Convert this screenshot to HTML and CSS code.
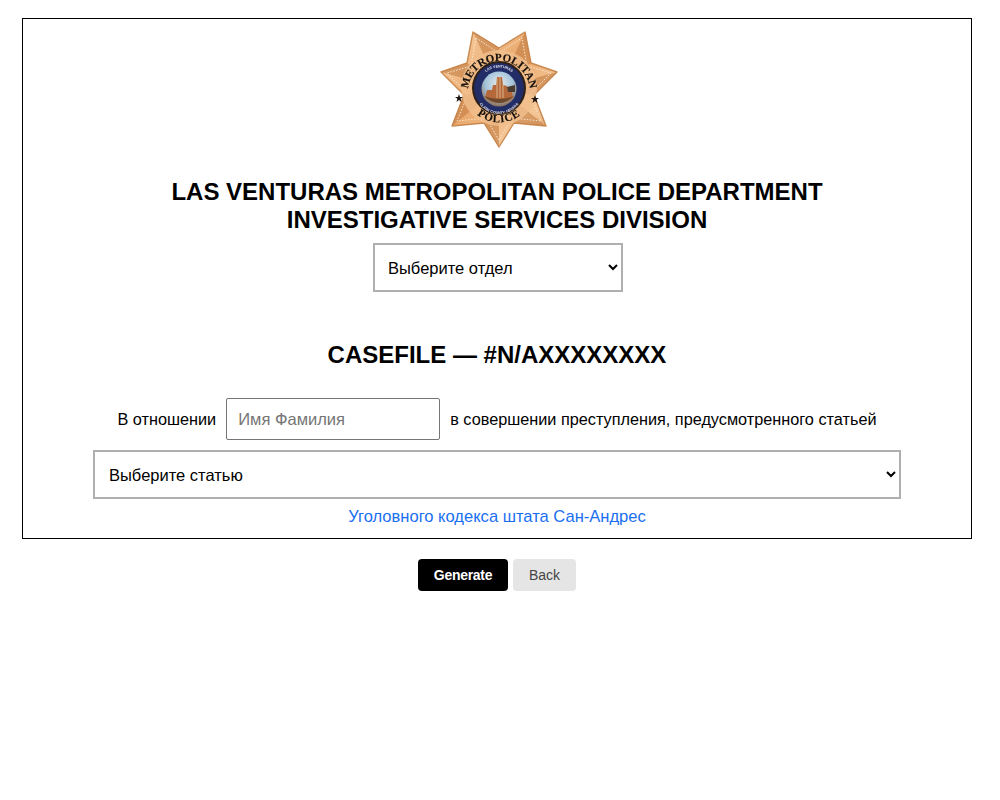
FILE: index.html
```html
<!DOCTYPE html>
<html lang="ru">
<head>
    <meta charset="UTF-8" />
    <meta name="viewport" content="width=device-width, initial-scale=1" />
    <title>Casefile</title>
    <link rel="stylesheet" href="styles.css">
</head>
<body>
    <div class="page">
        <div class="paper">
            <svg class="badge" viewBox="0 0 120 120" width="120" height="120">
                <defs>
                    <linearGradient id="gold" x1="0" y1="0" x2="1" y2="1">
                        <stop offset="0" stop-color="#f8d4aa"/>
                        <stop offset="0.45" stop-color="#eaa86c"/>
                        <stop offset="0.75" stop-color="#f5c797"/>
                        <stop offset="1" stop-color="#d08a4e"/>
                    </linearGradient>
                    <radialGradient id="scene" cx="0.5" cy="0.35" r="0.65">
                        <stop offset="0" stop-color="#e8ecec"/>
                        <stop offset="0.6" stop-color="#a3c3da"/>
                        <stop offset="1" stop-color="#8a6f58"/>
                    </radialGradient>
                    <path id="arc-top" d="M 29 62 A 31 31 0 0 1 91 62"/>
                    <path id="arc-bottom" d="M 27 68 A 34.5 34.5 0 0 0 93 68"/>
                    <path id="arc-ring-top" d="M 39.5 58 A 20.5 20.5 0 0 1 80.5 58"/>
                    <path id="arc-ring-bottom" d="M 36 60 A 24 24 0 0 0 84 60"/>
                </defs>
                <!-- estrella -->
                <polygon fill="url(#gold)" stroke="#c98a52" stroke-width="1.4" stroke-linejoin="round"
                    points="34,2 60,18 86,2 92,33 118,42 95,65 107,96 75,93 60,117 45,93 13,96 25,65 2,42 28,33"/>
                <g fill="#c47f45" opacity="0.6">
                    <polygon points="60,58 34,2 60,18"/>
                    <polygon points="60,58 86,2 92,33"/>
                    <polygon points="60,58 118,42 95,65"/>
                    <polygon points="60,58 107,96 75,93"/>
                    <polygon points="60,58 60,117 45,93"/>
                    <polygon points="60,58 13,96 25,65"/>
                    <polygon points="60,58 2,42 28,33"/>
                </g>
                <polygon fill="none" stroke="#fce6cc" stroke-width="1" stroke-dasharray="1.5 1.5"
                    points="37,8 60,23 83,8 88,36 112,43 91,64 102,91 73,88 60,110 47,88 18,91 29,64 8,43 32,36"/>
                <!-- sello -->
                <circle cx="60" cy="58" r="38" fill="#f1bf8d" opacity="0.8"/>
                <circle cx="60" cy="58" r="27" fill="#2e2014"/>
                <circle cx="60" cy="58" r="25" fill="#222c66"/>
                <circle cx="60" cy="59" r="17.5" fill="url(#scene)"/>
                <path d="M 46 68 L 48 60 L 53 60 L 54 55 L 57 55 L 58 47 L 63 47 L 64 55 L 68 56 L 69 61 L 73 60 L 74 68 Q 60 78 46 68 Z" fill="#b5693a"/>
                <path d="M 58 48 L 58 68 M 61 47 L 61 68 M 64 55 L 64 68" stroke="#e6c5a0" stroke-width="0.8"/>
                <path d="M 68 57 L 76 55 L 76 62 L 69 62 Z" fill="#4a3a30"/>
                <path d="M 45 66 Q 60 80 75 66 Q 60 72 45 66 Z" fill="#6d4a2e"/>
                <text class="badge-ring"><textPath href="#arc-ring-top" startOffset="50%">LAS VENTURAS</textPath></text>
                <text class="badge-ring"><textPath href="#arc-ring-bottom" startOffset="50%">CLARK COUNTY, NEVADA</textPath></text>
                <text class="badge-top"><textPath href="#arc-top" startOffset="50%">METROPOLITAN</textPath></text>
                <text class="badge-bottom"><textPath href="#arc-bottom" startOffset="50%">POLICE</textPath></text>
                <polygon fill="#1b1410" points="12,67 13,70 16,70 13.6,71.8 14.5,75 12,73 9.5,75 10.4,71.8 8,70 11,70" transform="translate(8 -3)"/>
                <polygon fill="#1b1410" points="12,67 13,70 16,70 13.6,71.8 14.5,75 12,73 9.5,75 10.4,71.8 8,70 11,70" transform="translate(84 -2)"/>
            </svg>

            <h1 class="title">LAS VENTURAS METROPOLITAN POLICE DEPARTMENT<br>INVESTIGATIVE SERVICES DIVISION</h1>

            <select class="field field-dept">
                <option>Выберите отдел</option>
            </select>

            <h2 class="casefile">CASEFILE — #N/AXXXXXXXX</h2>

            <div class="relation">
                <span>В отношении</span>
                <input class="name-input" type="text" placeholder="Имя Фамилия" />
                <span>в совершении преступления, предусмотренного статьей</span>
            </div>

            <select class="field field-article">
                <option>Выберите статью</option>
            </select>

            <a class="code-link" href="#">Уголовного кодекса штата Сан-Андрес</a>
        </div>

        <div class="actions">
            <button class="btn btn-generate">Generate</button>
            <button class="btn btn-back">Back</button>
        </div>
    </div>
</body>
</html>
```

FILE: styles.css
```css
body {
    font-family: "Liberation Sans", Arial, sans-serif;
    background: #fff;
    color: #000;
    margin: 0;
}
.page {
    width: 950px;
    margin: 18px 0 0 22px;
}
.paper {
    box-sizing: border-box;
    height: 521px;
    border: 1px solid #000;
    display: flex;
    flex-direction: column;
    align-items: center;
    padding-top: 11px;
}
.badge {
    display: block;
    flex: none;
    margin-left: 3px;
    filter: blur(0.35px);
}
.badge-top, .badge-bottom {
    font-family: "Liberation Serif", serif;
    font-weight: bold;
    fill: #17110c;
    stroke: #17110c;
    stroke-width: 0.15px;
    text-anchor: middle;
}
.badge-top {
    font-size: 11px;
}
.badge-bottom {
    font-size: 11px;
    letter-spacing: 0.8px;
}
.badge-ring {
    font-family: "Liberation Sans", sans-serif;
    font-size: 3.6px;
    font-weight: bold;
    fill: #e6e6ee;
    text-anchor: middle;
}
.title {
    font-size: 24px;
    line-height: 28px;
    font-weight: bold;
    text-align: center;
    margin: 28px 0 9px;
}
.field {
    box-sizing: border-box;
    height: 49px;
    border: 2px solid #afafaf;
    border-radius: 0;
    background: #fff;
    color: #000;
    font-family: inherit;
    font-size: 16.5px;
    padding: 0 10px;
}
.field-dept {
    width: 250px;
    margin-left: 2px;
    padding-left: 9px;
}
.field-article {
    width: 808px;
}
.casefile {
    font-size: 24px;
    line-height: 28px;
    font-weight: bold;
    margin: 49px 0 29px;
}
.relation {
    display: flex;
    align-items: center;
    justify-content: center;
    gap: 10px;
    font-size: 16.25px;
    margin-bottom: 10px;
}
.name-input {
    box-sizing: border-box;
    width: 214px;
    height: 42px;
    border: 1px solid #767676;
    border-radius: 2px;
    padding: 0 11px;
    font-family: inherit;
    font-size: 16.5px;
}
.code-link {
    color: #1a6ff0;
    text-decoration: none;
    font-size: 16.55px;
    margin-top: 8px;
}
.actions {
    display: flex;
    justify-content: center;
    gap: 5px;
    margin-top: 20px;
}
.btn {
    height: 32px;
    border: none;
    border-radius: 4px;
    font-family: inherit;
    font-size: 14px;
    padding: 0;
}
.btn-generate {
    width: 90px;
    background: #000;
    color: #fff;
    font-weight: bold;
    letter-spacing: -0.3px;
}
.btn-back {
    width: 63px;
    background: #e5e5e5;
    color: #444;
}
```
